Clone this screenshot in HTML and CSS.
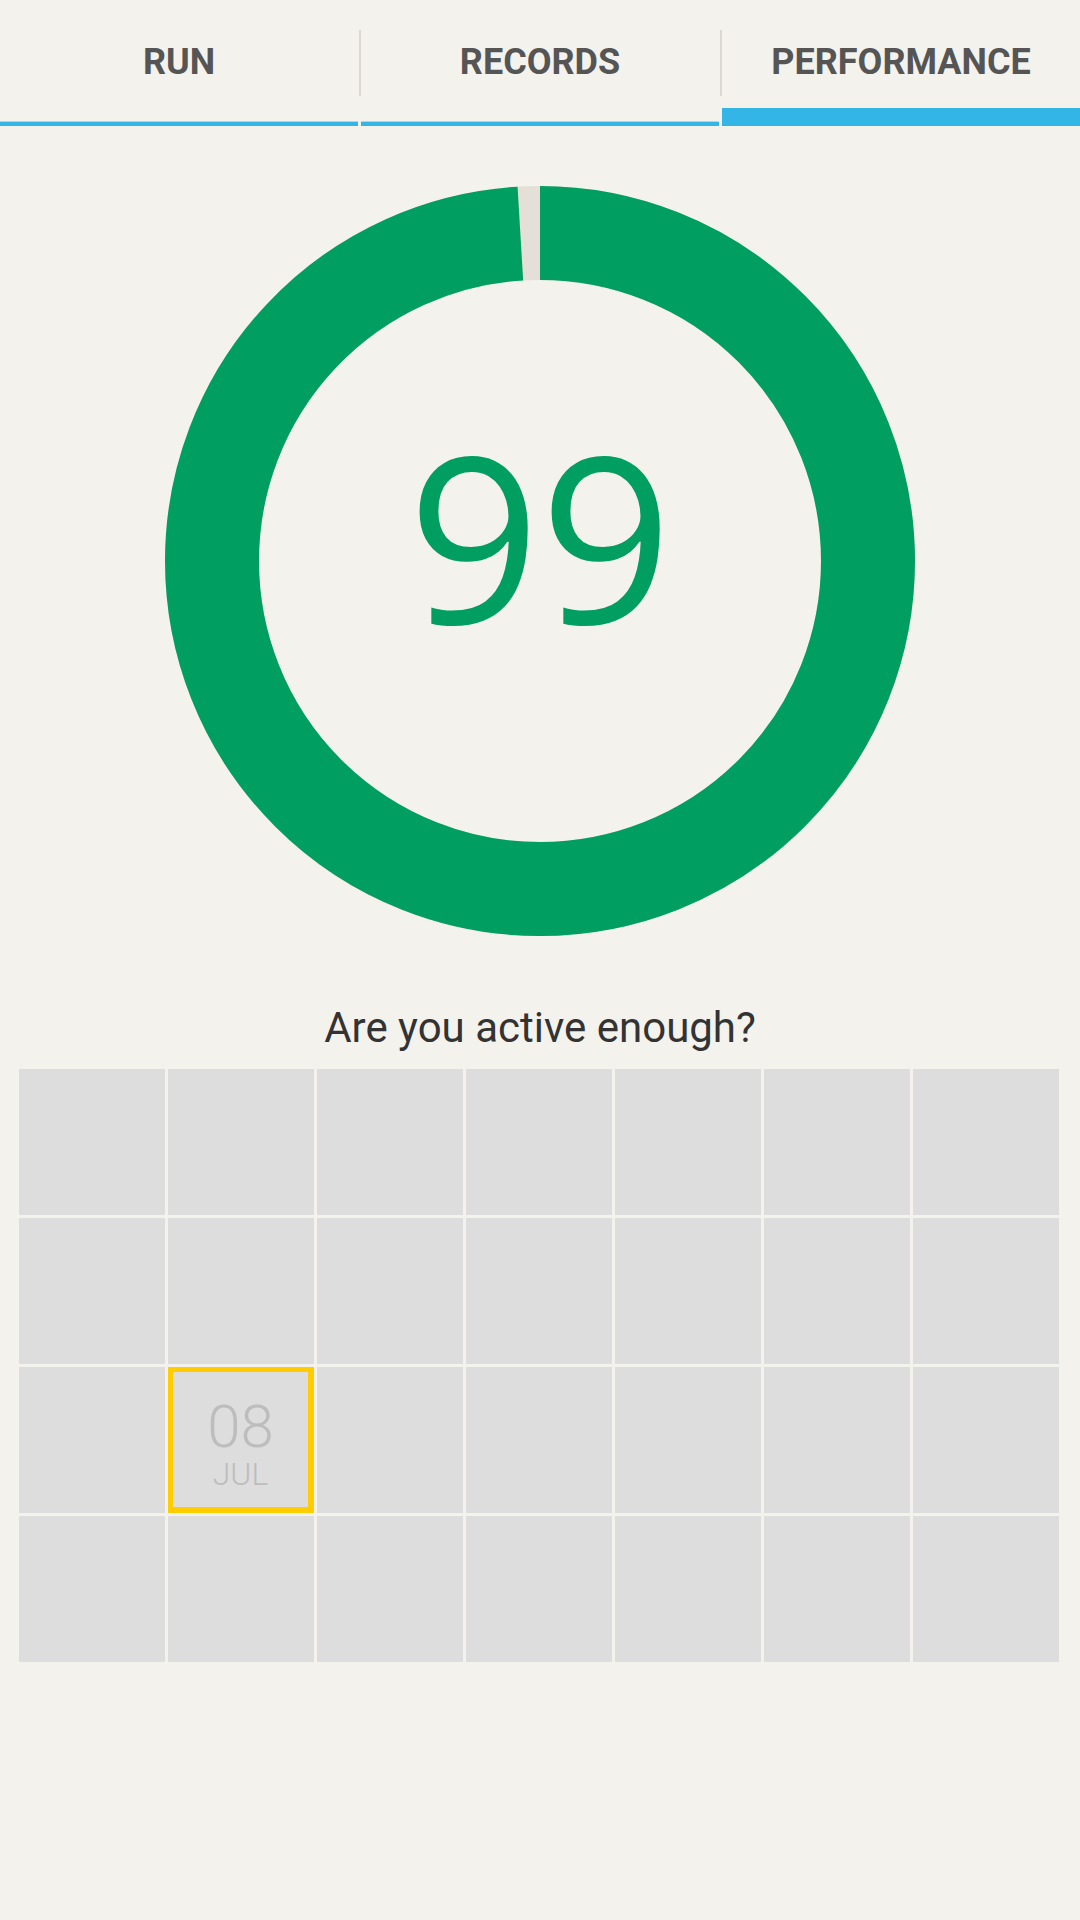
FILE: index.html
```html
<!DOCTYPE html>
<html lang="en">
<head>
    <meta charset="UTF-8">
    <meta name="viewport" content="width=device-width, initial-scale=1.0">
    <title>Performance</title>
    <link rel="stylesheet" href="styles.css">
</head>
<body>
    <div class="tabs">
        <div class="tab">
            <div class="tab-label">RUN</div>
            <div class="tab-indicator"></div>
        </div>
        <div class="tab-divider"></div>
        <div class="tab">
            <div class="tab-label">RECORDS</div>
            <div class="tab-indicator"></div>
        </div>
        <div class="tab-divider"></div>
        <div class="tab active">
            <div class="tab-label">PERFORMANCE</div>
            <div class="tab-indicator"></div>
        </div>
    </div>

    <div class="score">
        <svg class="score-ring" width="750" height="750" viewBox="0 0 750 750">
            <circle cx="375" cy="375" r="328" fill="none" stroke="#e5e0d7" stroke-width="94"/>
            <!-- 99% of the circumference, starting at 12 o'clock -->
            <circle cx="375" cy="375" r="328" fill="none" stroke="#009e60" stroke-width="94"
                    stroke-dasharray="2040.3 2060.9" transform="rotate(-90 375 375)"/>
        </svg>
        <div class="score-value">99</div>
    </div>

    <h2 class="question">Are you active enough?</h2>

    <div class="calendar">
        <div class="day"></div><div class="day"></div><div class="day"></div><div class="day"></div><div class="day"></div><div class="day"></div><div class="day"></div>
        <div class="day"></div><div class="day"></div><div class="day"></div><div class="day"></div><div class="day"></div><div class="day"></div><div class="day"></div>
        <div class="day"></div>
        <div class="day today">
            <div class="day-num">08</div>
            <div class="day-month">JUL</div>
        </div>
        <div class="day"></div><div class="day"></div><div class="day"></div><div class="day"></div><div class="day"></div>
        <div class="day"></div><div class="day"></div><div class="day"></div><div class="day"></div><div class="day"></div><div class="day"></div><div class="day"></div>
    </div>
</body>
</html>
```

FILE: styles.css
```css
body {
    margin: 0;
    background: #f4f2ec;
    font-family: 'Roboto', 'Open Sans', sans-serif;
    width: 1080px;
    height: 1920px;
    overflow: hidden;
}
.tabs {
    display: grid;
    grid-template-columns: 1fr 3px 1fr 3px 1fr;
    height: 126px;
}
.tab {
    display: flex;
    flex-direction: column;
}
.tab-label {
    padding-top: 41px;
    line-height: 42px;
    font-size: 36px;
    font-weight: 700;
    color: #555;
    text-align: center;
}
.tab-indicator {
    margin-top: auto;
    height: 4px;
    background: #33b5e5;
    border-top: 1px solid #a6d8ea;
}
.tab.active .tab-indicator {
    height: 18px;
    border-top: none;
}
.tab-divider {
    margin: 30px 0 0 1px;
    width: 2px;
    height: 66px;
    background: #dcd8d0;
}
.score {
    position: relative;
    width: 750px;
    height: 750px;
    margin: 60px auto 0 auto;
}
.score-ring {
    display: block;
}
.score-value {
    position: absolute;
    left: 0;
    right: 0;
    top: 233px;
    text-align: center;
    font-family: 'Open Sans', sans-serif;
    font-size: 231px;
    line-height: 231px;
    color: #009e60;
}
.question {
    margin: 67px 0 17px 0;
    font-size: 42px;
    line-height: 49px;
    font-weight: 400;
    color: #333;
    text-align: center;
}
.calendar {
    display: grid;
    grid-template-columns: repeat(7, 146px);
    grid-auto-rows: 146px;
    gap: 3px;
    margin-left: 19px;
}
.day {
    background: #dddddd;
    box-sizing: border-box;
}
.day.today {
    border: 6px solid #ffcc00;
    border-left-width: 5px;
    border-top-width: 5px;
    padding-top: 30px;
    text-align: center;
    color: #bdbdbd;
}
.day-num {
    font-size: 60px;
    line-height: 50px;
    font-weight: 300;
}
.day-month {
    margin-top: 8px;
    font-size: 32px;
    line-height: 28px;
    font-weight: 300;
}
```
